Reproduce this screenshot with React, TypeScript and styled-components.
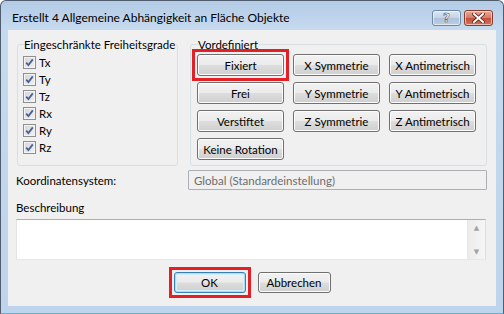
import * as React from "react";
import styled, { createGlobalStyle, css } from "styled-components";

const GlobalStyle = createGlobalStyle`
  html, body {
    margin: 0;
    padding: 0;
    background: #ffffff;
  }
  body {
    font-family: "Segoe UI", Lato, "Liberation Sans", sans-serif;
    font-size: 11.5px;
    color: #000;
  }
`;

const DOF = ["Tx", "Ty", "Tz", "Rx", "Ry", "Rz"];

const PRESETS: { label: string; marked?: boolean }[] = [
  { label: "Fixiert", marked: true },
  { label: "X Symmetrie" },
  { label: "X Antimetrisch" },
  { label: "Frei" },
  { label: "Y Symmetrie" },
  { label: "Y Antimetrisch" },
  { label: "Verstiftet" },
  { label: "Z Symmetrie" },
  { label: "Z Antimetrisch" },
  { label: "Keine Rotation" },
];

const CheckMark = () => (
  <svg width="9" height="9" viewBox="0 0 9 9">
    <path d="M1.2 4.6 L3.4 7 L7.8 1.4" fill="none" stroke="#4a5f97" strokeWidth="1.8" />
  </svg>
);

const CloseGlyph = () => (
  <svg width="13" height="10" viewBox="0 0 13 10">
    <path d="M2 1 L11 9 M11 1 L2 9" stroke="#5a2318" strokeWidth="3.6" strokeLinecap="square" />
    <path d="M2 1 L11 9 M11 1 L2 9" stroke="#ffffff" strokeWidth="2" strokeLinecap="square" />
  </svg>
);

export default function App() {
  return (
    <>
      <GlobalStyle />
      <Window>
        <TitleBar>
          <Title>Erstellt 4 Allgemeine Abhängigkeit an Fläche Objekte</Title>
          <CaptionButtons>
            <CaptionButton>
              <HelpGlyph>?</HelpGlyph>
            </CaptionButton>
            <CaptionButton $close>
              <CloseGlyph />
            </CaptionButton>
          </CaptionButtons>
        </TitleBar>

        <Client>
          <GroupRow>
            <DofGroup>
              <Legend>Eingeschränkte Freiheitsgrade</Legend>
              <CheckList>
                {DOF.map((d) => (
                  <CheckRow key={d}>
                    <CheckBox>
                      <CheckMark />
                    </CheckBox>
                    {d}
                  </CheckRow>
                ))}
              </CheckList>
            </DofGroup>

            <PresetGroup>
              <Legend>Vordefiniert</Legend>
              <PresetGrid>
                {PRESETS.map((p) => (
                  <Button key={p.label} $marked={p.marked}>
                    {p.label}
                  </Button>
                ))}
              </PresetGrid>
            </PresetGroup>
          </GroupRow>

          <CoordRow>
            <span>Koordinatensystem:</span>
            <Combo>Global (Standardeinstellung)</Combo>
          </CoordRow>

          <Label>Beschreibung</Label>
          <Memo>
            <MemoText />
            <ScrollBar>
              <Arrow>&#9650;</Arrow>
              <Arrow>&#9660;</Arrow>
            </ScrollBar>
          </Memo>

          <Footer>
            <Button $width={72} $default $marked>
              OK
            </Button>
            <Button $width={73}>Abbrechen</Button>
          </Footer>
        </Client>
      </Window>
    </>
  );
}

const Window = styled.div`
  box-sizing: border-box;
  width: 504px;
  height: 314px;
  display: flex;
  flex-direction: column;
  padding: 0 7px 7px 7px;
  border: 1px solid #4f5d6e;
  border-bottom-color: #36c4e2;
  border-radius: 6px 6px 0 0;
  background: linear-gradient(180deg, #b3cbe6 0px, #c6daef 28px, #bdd4ec 100%);
`;

const TitleBar = styled.div`
  height: 29px;
  display: flex;
  align-items: center;
  padding-top: 4px;
  box-sizing: border-box;
`;

const Title = styled.div`
  flex: 1;
  padding-left: 4px;
  font-size: 12px;
  color: #000;
  white-space: nowrap;
`;

const CaptionButtons = styled.div`
  display: flex;
  gap: 3px;
  margin-right: 3px;
`;

const CaptionButton = styled.div<{ $close?: boolean }>`
  width: 29px;
  height: 16px;
  box-sizing: border-box;
  display: flex;
  align-items: center;
  justify-content: center;
  border-radius: 3px;
  border: 1px solid #6d87a8;
  background: linear-gradient(180deg, #dbe6f3 0%, #c4d4e8 48%, #aec2dc 52%, #bccde4 100%);
  box-shadow: inset 0 0 0 1px rgba(255, 255, 255, 0.55);
  ${(p) =>
    p.$close &&
    css`
      border-color: #8c3a2c;
      background: linear-gradient(180deg, #e9a999 0%, #d47b66 48%, #c2513a 52%, #d2735a 100%);
    `}
`;

const HelpGlyph = styled.span`
  font-family: "DejaVu Sans", sans-serif;
  font-weight: bold;
  font-size: 12px;
  line-height: 12px;
  color: #ffffff;
  -webkit-text-stroke: 0.6px #4d5f78;
`;

const Client = styled.div`
  flex: 1;
  display: flex;
  flex-direction: column;
  background: #f0f0f0;
  padding: 7px 9px 0 8px;
  box-sizing: border-box;
`;

const GroupRow = styled.div`
  display: flex;
  gap: 12px;
  margin-left: 1px;
`;

const Group = styled.fieldset`
  margin: 0;
  border: 1px solid #d5dfe5;
  border-radius: 3px;
  box-sizing: border-box;
  min-width: 0;
`;

const DofGroup = styled(Group)`
  width: 161px;
  padding: 2px 0 9px 5px;
`;

const PresetGroup = styled(Group)`
  flex: 1;
  padding: 2px 0 5px 6px;
`;

const Legend = styled.legend`
  padding: 0 1px 0 0;
  margin-left: 1px;
  line-height: 15px;
  white-space: nowrap;
`;

const CheckList = styled.div`
  display: flex;
  flex-direction: column;
`;

const CheckRow = styled.div`
  height: 17px;
  display: flex;
  align-items: center;
  gap: 3px;
`;

const CheckBox = styled.span`
  width: 13px;
  height: 13px;
  box-sizing: border-box;
  border: 1px solid #8f8f8f;
  background: linear-gradient(135deg, #d4d4d4 0%, #e4e4e4 50%, #f2f2f2 100%);
  box-shadow: inset 0 0 0 1px #f4f4f4;
  display: flex;
  align-items: center;
  justify-content: center;
`;

const PresetGrid = styled.div`
  display: grid;
  grid-template-columns: repeat(3, 87px);
  grid-auto-rows: 22px;
  column-gap: 9px;
  row-gap: 6px;
`;

const Button = styled.div<{ $width?: number; $default?: boolean; $marked?: boolean }>`
  position: relative;
  box-sizing: border-box;
  width: ${(p) => (p.$width ? `${p.$width}px` : "auto")};
  height: ${(p) => (p.$width ? "21px" : "22px")};
  display: flex;
  align-items: center;
  justify-content: center;
  border: 1px solid #707070;
  border-radius: 3px;
  background: linear-gradient(180deg, #f2f2f2 0%, #ebebeb 48%, #dddddd 52%, #cfcfcf 100%);
  box-shadow: inset 0 0 0 1px #fcfcfc;
  white-space: nowrap;
  ${(p) =>
    p.$default &&
    css`
      border-color: #3c7fb1;
      box-shadow: inset 0 0 0 1px #9ce3fa, inset 0 0 0 2px #d3f1fc;
    `}
  ${(p) =>
    p.$marked &&
    css`
      &::after {
        content: "";
        position: absolute;
        inset: -6px;
        border: 3px solid #e41f26;
        pointer-events: none;
      }
    `}
`;

const CoordRow = styled.div`
  display: grid;
  grid-template-columns: 172px 1fr;
  align-items: center;
  margin-top: 4px;
`;

const Combo = styled.div`
  height: 20px;
  box-sizing: border-box;
  border: 1px solid #acb0b4;
  border-radius: 1px;
  padding-left: 5px;
  display: flex;
  align-items: center;
  color: #6d6d6d;
`;

const Label = styled.div`
  margin-top: 10px;
  line-height: 15px;
`;

const Memo = styled.div`
  margin: 4px 1px 0 0;
  height: 41px;
  box-sizing: border-box;
  display: flex;
  border: 1px solid #abadb3;
  border-color: #abadb3 #dbdfe6 #e3e9ef #e2e3ea;
  background: #ffffff;
`;

const MemoText = styled.div`
  flex: 1;
`;

const ScrollBar = styled.div`
  width: 17px;
  display: flex;
  flex-direction: column;
  justify-content: space-between;
  align-items: center;
  padding: 4px 0 3px;
  background: linear-gradient(90deg, #ececec, #f6f6f6);
  border-left: 1px solid #e7e7e7;
`;

const Arrow = styled.span`
  font-family: "DejaVu Sans", sans-serif;
  font-size: 7px;
  line-height: 8px;
  color: #a3a3a3;
`;

const Footer = styled.div`
  display: flex;
  justify-content: center;
  gap: 12px;
  margin-top: 12px;
  padding-left: 1px;
`;
